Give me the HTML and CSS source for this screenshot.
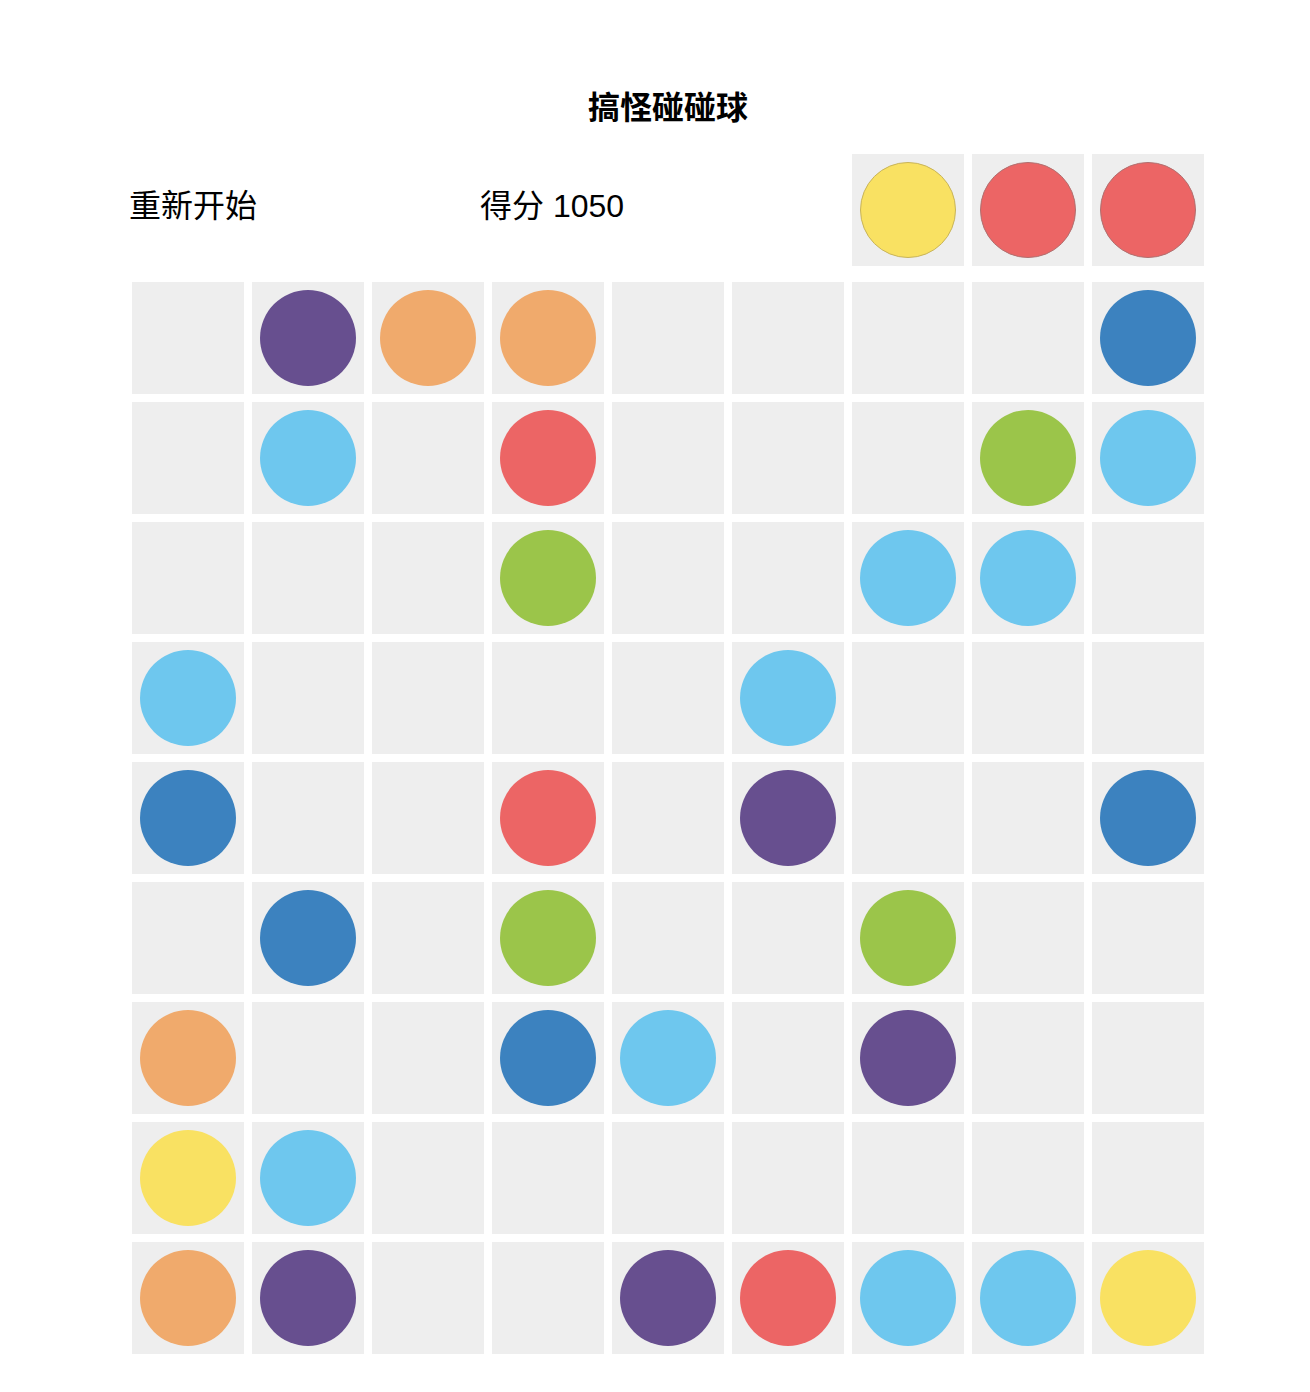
FILE: index.html
```html
<!DOCTYPE html>
<html lang="zh">
<head>
<meta charset="utf-8">
<title>搞怪碰碰球</title>
<link rel="stylesheet" href="styles.css">
</head>
<body>
<div class="game">
  <h1 class="title">搞怪碰碰球</h1>
  <div class="header">
    <div class="restart">重新开始</div>
    <div class="score">得分 1050</div>
    <div class="preview">
      <div class="cell"><div class="ball yellow outlined"></div></div>
      <div class="cell"><div class="ball red outlined"></div></div>
      <div class="cell"><div class="ball red outlined"></div></div>
    </div>
  </div>
  <div class="board">
    <div class="cell"></div><div class="cell"><div class="ball purple"></div></div><div class="cell"><div class="ball orange"></div></div><div class="cell"><div class="ball orange"></div></div><div class="cell"></div><div class="cell"></div><div class="cell"></div><div class="cell"></div><div class="cell"><div class="ball blue"></div></div>
    <div class="cell"></div><div class="cell"><div class="ball light"></div></div><div class="cell"></div><div class="cell"><div class="ball red"></div></div><div class="cell"></div><div class="cell"></div><div class="cell"></div><div class="cell"><div class="ball green"></div></div><div class="cell"><div class="ball light"></div></div>
    <div class="cell"></div><div class="cell"></div><div class="cell"></div><div class="cell"><div class="ball green"></div></div><div class="cell"></div><div class="cell"></div><div class="cell"><div class="ball light"></div></div><div class="cell"><div class="ball light"></div></div><div class="cell"></div>
    <div class="cell"><div class="ball light"></div></div><div class="cell"></div><div class="cell"></div><div class="cell"></div><div class="cell"></div><div class="cell"><div class="ball light"></div></div><div class="cell"></div><div class="cell"></div><div class="cell"></div>
    <div class="cell"><div class="ball blue"></div></div><div class="cell"></div><div class="cell"></div><div class="cell"><div class="ball red"></div></div><div class="cell"></div><div class="cell"><div class="ball purple"></div></div><div class="cell"></div><div class="cell"></div><div class="cell"><div class="ball blue"></div></div>
    <div class="cell"></div><div class="cell"><div class="ball blue"></div></div><div class="cell"></div><div class="cell"><div class="ball green"></div></div><div class="cell"></div><div class="cell"></div><div class="cell"><div class="ball green"></div></div><div class="cell"></div><div class="cell"></div>
    <div class="cell"><div class="ball orange"></div></div><div class="cell"></div><div class="cell"></div><div class="cell"><div class="ball blue"></div></div><div class="cell"><div class="ball light"></div></div><div class="cell"></div><div class="cell"><div class="ball purple"></div></div><div class="cell"></div><div class="cell"></div>
    <div class="cell"><div class="ball yellow"></div></div><div class="cell"><div class="ball light"></div></div><div class="cell"></div><div class="cell"></div><div class="cell"></div><div class="cell"></div><div class="cell"></div><div class="cell"></div><div class="cell"></div>
    <div class="cell"><div class="ball orange"></div></div><div class="cell"><div class="ball purple"></div></div><div class="cell"></div><div class="cell"></div><div class="cell"><div class="ball purple"></div></div><div class="cell"><div class="ball red"></div></div><div class="cell"><div class="ball light"></div></div><div class="cell"><div class="ball light"></div></div><div class="cell"><div class="ball yellow"></div></div>
  </div>
</div>
</body>
</html>
```
FILE: styles.css
```css
html, body {
  margin: 0;
  padding: 0;
  background: #ffffff;
}
body {
  font-family: "Liberation Sans", "Noto Sans CJK SC", sans-serif;
  color: #000;
}
.game {
  width: 1072px;
  margin-left: 132px;
  padding-top: 88px;
}
.title {
  margin: 0;
  height: 40px;
  line-height: 40px;
  font-size: 32px;
  font-weight: bold;
  text-align: center;
}
.header {
  margin-top: 26px;
  display: flex;
  align-items: center;
  height: 112px;
}
.restart {
  width: 351px;
  margin-left: -3px;
  font-size: 32px;
  line-height: 40px;
  padding-bottom: 9px;
}
.score {
  flex: 1;
  font-size: 32px;
  line-height: 40px;
  padding-bottom: 9px;
}
.preview {
  display: flex;
  gap: 8px;
}
.board {
  margin-top: 16px;
  display: grid;
  grid-template-columns: repeat(9, 112px);
  grid-auto-rows: 112px;
  gap: 8px;
}
.cell {
  width: 112px;
  height: 112px;
  background: #eeeeee;
  box-sizing: border-box;
  padding: 8px;
}
.ball {
  width: 96px;
  height: 96px;
  border-radius: 50%;
  box-sizing: border-box;
}
.outlined {
  border: 1px solid #a9a9a9;
}
.purple { background: #674f8f; }
.orange { background: #f0aa6c; }
.blue { background: #3c82bf; }
.light { background: #6ec7ee; }
.red { background: #ec6565; }
.green { background: #9bc54a; }
.yellow { background: #f9e162; }
.outlined.yellow { border-color: #c8b45a; }
.outlined.red { border-color: #b07070; }
```
